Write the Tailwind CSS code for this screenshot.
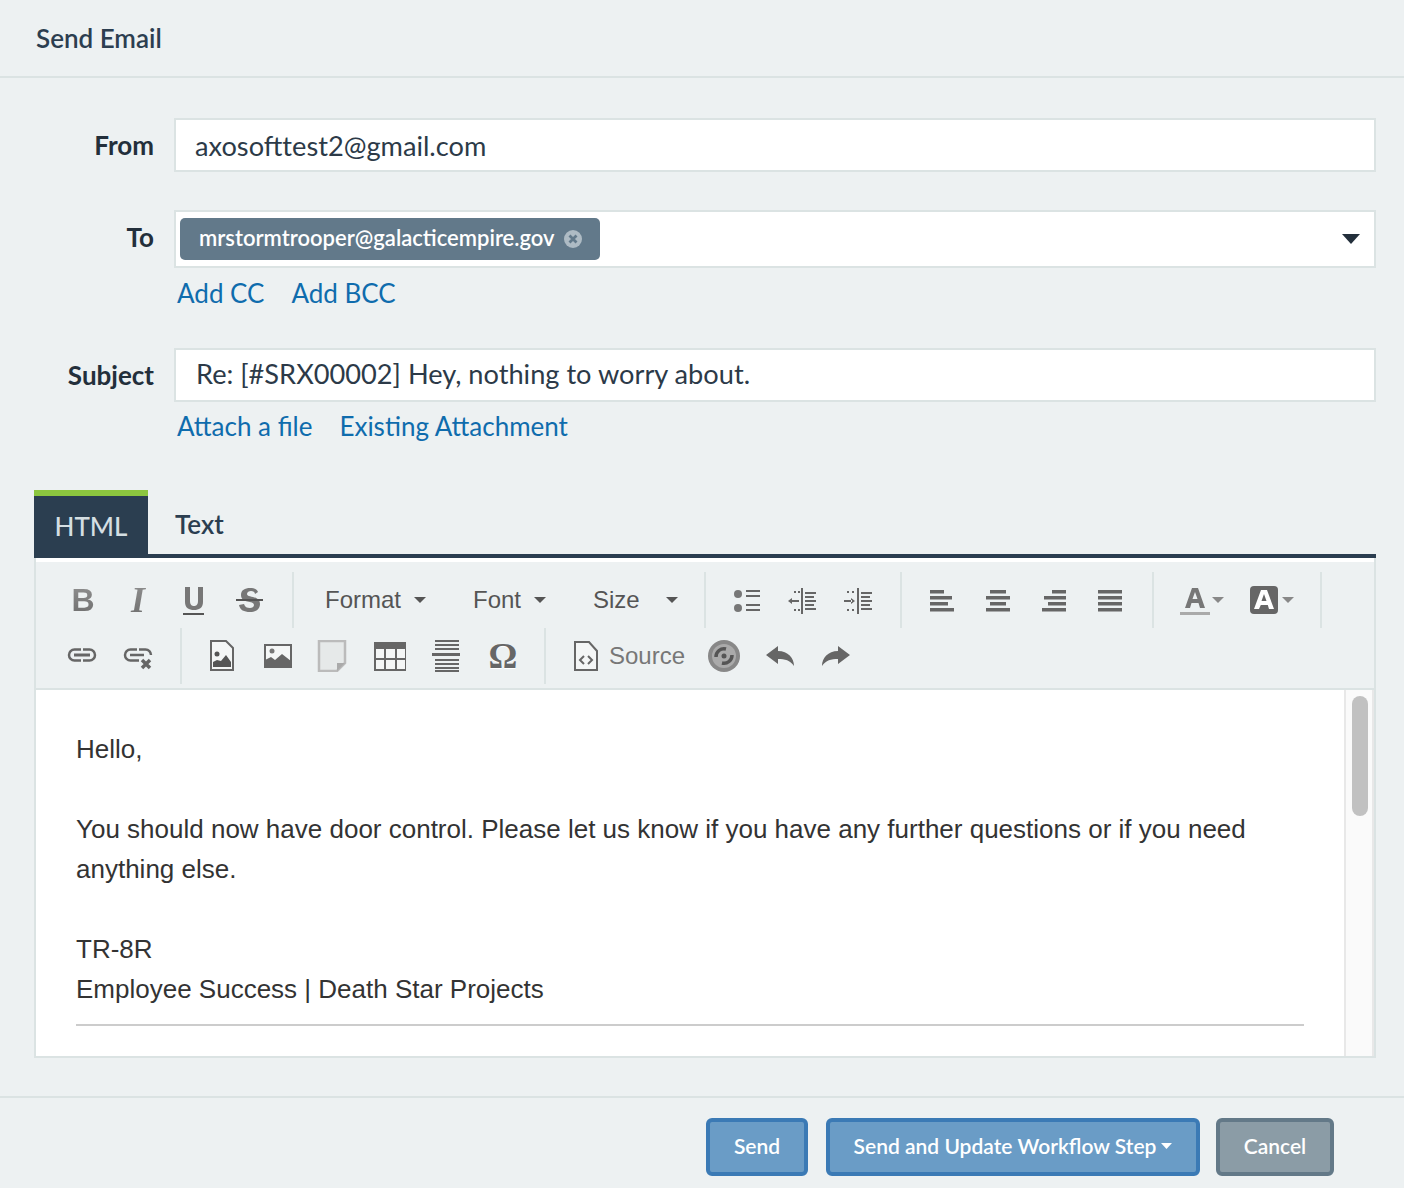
<!DOCTYPE html>
<html><head><meta charset="utf-8"><title>Send Email</title>
<script src="https://cdn.jsdelivr.net/npm/@tailwindcss/browser@4"></script></head>
<body class="m-0 bg-[#edf1f2] font-['Lato',sans-serif] text-[#2c3e50]">
<div class="w-[1404px] h-[1188px] overflow-hidden flex flex-col">
  <header class="h-[78px] shrink-0 border-b-2 border-[#dbe3e3] pl-[36px] flex items-center"><h1 class="text-[26px] font-semibold">Send Email</h1></header>
  <main class="pt-[40px] pl-[34px] pr-[28px] flex-1">
    <div class="flex h-[54px]">
      <label class="w-[120px] text-right text-[26px] font-bold text-[#232f3b] leading-[54px] pb-[2px]">From</label>
      <div class="ml-[20px] flex-1 bg-white border-2 border-[#dbe3e3] pl-[19px] text-[27.2px] leading-[52px] text-[#2c3a48]">axosofttest2@gmail.com</div>
    </div>
    <div class="flex h-[58px] mt-[38px]">
      <label class="w-[120px] text-right text-[26px] font-bold text-[#232f3b] leading-[54px]">To</label>
      <div class="ml-[20px] flex-1 bg-white border-2 border-[#dbe3e3] pl-[4px] flex items-center justify-between pr-[14px]">
        <span class="h-[42px] w-[420px] bg-[#62798a] rounded-[5px] flex items-center pl-[19px] text-white text-[22px] font-medium"><span class="pb-[4px] font-semibold">mrstormtrooper@galacticempire.gov</span>
          <svg class="ml-[8px]" width="20" height="20" viewBox="0 0 20 20"><circle cx="10" cy="10" r="9" fill="#aebbc4"/><path d="M6.5 6.5l7 7M13.500 6.500l-7 7" stroke="#62798a" stroke-width="2.800"/></svg>
        </span>
        <svg width="18" height="10" viewBox="0 0 18 10"><path d="M0 0h18l-9 10z" fill="#232f3b"/></svg>
      </div>
    </div>
    <div class="ml-[143px] h-[50px] flex gap-[27px] text-[26px] leading-[50px] text-[#0f6cad]"><a>Add CC</a><a>Add BCC</a></div>
    <div class="flex h-[54px] mt-[30px]">
      <label class="w-[120px] text-right text-[26px] font-bold text-[#232f3b] leading-[54px]">Subject</label>
      <div class="ml-[20px] flex-1 bg-white border-2 border-[#dbe3e3] pl-[20px] text-[27.2px] leading-[48px] text-[#2c3a48]">Re: [#SRX00002] Hey, nothing to worry about.</div>
    </div>
    <div class="ml-[143px] h-[50px] flex gap-[27px] text-[26px] leading-[48px] text-[#0f6cad]"><a>Attach a file</a><a>Existing Attachment</a></div>
    <div class="mt-[38px] flex h-[68px] border-b-4 border-[#2b3e50] w-[1342px]">
      <div class="w-[114px] h-[66px] border-t-[6px] border-[#8cc63f] bg-[#2b3e50] text-[#d5dee2] text-[26px] font-medium flex items-center justify-center">HTML</div>
      <div class="pl-[27px] text-[26px] font-semibold leading-[68px] text-[#2b3e50]">Text</div>
    </div>
    <div class="w-[1342px] h-[500px] border-x-2 border-b-2 border-[#dbe3e3] flex flex-col">
      <div class="h-[4px] bg-white shrink-0"></div>
      <div class="h-[126px] shrink-0 pt-[10px] text-[#666] text-[24px]">
        <div class="flex h-[56px] pl-[18px] items-center">
          <span class="w-[56px] pl-[2px] text-center font-['Liberation_Sans',sans-serif] font-bold text-[32px] bg-gradient-to-b from-[#999] to-[#666] bg-clip-text text-transparent">B</span>
          <span class="w-[56px] text-center font-['Liberation_Serif',serif] font-bold italic text-[36px] bg-gradient-to-b from-[#999] to-[#666] bg-clip-text text-transparent">I</span>
          <span class="w-[56px] flex justify-center"><svg width="32" height="32" viewBox="0 0 32 32"><path d="M7 3h5v14c0 4 2 5 4 5s4-1 4-5V3h5v15c0 6-4 8-9 8s-9-2-9-8z" fill="#777"/><path d="M5 29h21v2H5z" fill="#555"/></svg></span>
          <span class="w-[56px] flex justify-center"><svg width="32" height="32" viewBox="0 0 32 32"><path d="M24 8c-1-3-4-4-8-4-5 0-9 2-9 7 0 9 13 5 13 10 0 2-2 3-4 3-3 0-5-1-6-4l-5 1c1 5 5 7 11 7s10-3 10-8c0-9-13-6-13-10 0-2 2-3 4-3s4 1 4 3z" fill="#777"/><path d="M2 15h27v2H2z" fill="#555"/></svg></span>
          <i class="ml-[14px] w-[2px] h-[56px] bg-[#dbe3e3]"></i>
          <div class="w-[148px] pl-[31px] pr-[16px] flex items-center justify-between font-['Liberation_Sans',sans-serif] text-[#555]">Format<svg width="12" height="6" viewBox="0 0 12 6"><path d="M0 0h12l-6 6z" fill="#555"/></svg></div>
          <div class="w-[120px] pl-[31px] pr-[16px] flex items-center justify-between font-['Liberation_Sans',sans-serif] text-[#555]">Font<svg width="12" height="6" viewBox="0 0 12 6"><path d="M0 0h12l-6 6z" fill="#555"/></svg></div>
          <div class="w-[142px] pl-[31px] pr-[26px] flex items-center justify-between font-['Liberation_Sans',sans-serif] text-[#555]">Size<svg width="12" height="6" viewBox="0 0 12 6"><path d="M0 0h12l-6 6z" fill="#555"/></svg></div>
          <i class="w-[2px] h-[56px] bg-[#dbe3e3]"></i>
          <div class="ml-[13px] w-[56px] flex justify-center"><svg width="32" height="32" viewBox="0 0 32 32" fill="#666"><circle cx="7" cy="10" r="4" fill="#777"/><circle cx="7" cy="24" r="4" fill="#777"/><path d="M15 6h14v2H15zM15 11h14v2H15zM15 20h14v2H15zM15 25h14v2H15z"/></svg></div>
          <div class="w-[56px] flex justify-center"><svg width="32" height="32" viewBox="0 0 32 32" fill="#666"><path d="M14 4h2v26h-2zM18 8h11v2H18zM18 12h9v2h-9zM18 16h11v2H18zM18 20h9v2h-9zM18 24h11v2H18z"/><path d="M3 16h9v2H3zM1 17l4-3v6zM7 7h2v2H7zM11 7h2v2h-2zM7 25h2v2H7zM11 25h2v2h-2z"/></svg></div>
          <div class="w-[56px] flex justify-center"><svg width="32" height="32" viewBox="0 0 32 32" fill="#666"><path d="M14 4h2v26h-2zM18 8h11v2H18zM18 12h9v2h-9zM18 16h11v2H18zM18 20h9v2h-9zM18 24h11v2H18z"/><path d="M1 16h8v2H1zM12 17l-4-3v6zM4 7h2v2H4zM9 7h2v2H9zM4 25h2v2H4zM9 25h2v2H9z"/></svg></div>
          <i class="ml-[13px] w-[2px] h-[56px] bg-[#dbe3e3]"></i>
          <div class="ml-[12px] w-[56px] flex justify-center"><svg width="32" height="32" viewBox="0 0 32 32" fill="#666"><path d="M4 6h14v3.500H4zM4 12h22v3.500H4zM4 18h18v3.500H4zM4 24h24v3.500H4z"/></svg></div>
          <div class="w-[56px] flex justify-center"><svg width="32" height="32" viewBox="0 0 32 32" fill="#666"><path d="M8 6h16v3.500H8zM4 12h24v3.500H4zM8 18h16v3.500H8zM4 24h24v3.500H4z"/></svg></div>
          <div class="w-[56px] flex justify-center"><svg width="32" height="32" viewBox="0 0 32 32" fill="#666"><path d="M14 6h14v3.500H14zM6 12h22v3.500H6zM10 18h18v3.500H10zM4 24h24v3.500H4z"/></svg></div>
          <div class="w-[56px] flex justify-center"><svg width="32" height="32" viewBox="0 0 32 32" fill="#666"><path d="M4 6h24v3.500H4zM4 12h24v3.500H4zM4 18h24v3.500H4zM4 24h24v3.500H4z"/></svg></div>
          <i class="ml-[14px] w-[2px] h-[56px] bg-[#dbe3e3]"></i>
          <div class="w-[96px] pl-[26px] flex items-center"><svg width="46" height="32" viewBox="0 0 46 32"><path d="M5 24L12 4h6l7 20h-5l-1.500-5h-7L10 24zM12.500 15h5L15 8z" fill="#777"/><path d="M0 28h30v3H0z" fill="#aaa"/><path d="M32 13h12l-6 6z" fill="#888"/></svg></div>
          <div class="w-[70px] flex items-center"><svg width="46" height="32" viewBox="0 0 46 32"><rect x="0" y="2" width="28" height="28" rx="4" fill="#666"/><path d="M4 25L11 6h6l7 19h-5l-1.200-4h-7L9 25zM11.500 17h5L14 10z" fill="#fff"/><path d="M32 13h12l-6 6z" fill="#888"/></svg></div>
          <i class="w-[2px] h-[56px] bg-[#dbe3e3]"></i>
        </div>
        <div class="flex h-[56px] pl-[18px] items-center">
          <div class="w-[56px] flex justify-center"><svg width="32" height="32" viewBox="0 0 32 32" fill="none" stroke="#666" stroke-width="2.500"><path d="M15 9.500H8.500a5.500 5.500 0 0 0 0 11H15M17 9.500h6.500a5.500 5.500 0 0 1 0 11H17"/><path d="M8 15h16" stroke-width="3"/></svg></div>
          <div class="w-[56px] flex justify-center"><svg width="32" height="32" viewBox="0 0 32 32" fill="none" stroke="#666" stroke-width="2.500"><path d="M15 9.500H8.500a5.500 5.500 0 0 0 0 11H17M17 9.500h6.500a5.500 5.500 0 0 1 5.500 5.500M8 15h14"/><path d="M20 20l8 8M28 20l-8 8" stroke-width="3.500"/></svg></div>
          <i class="ml-[14px] w-[2px] h-[56px] bg-[#dbe3e3]"></i>
          <div class="ml-[12px] w-[56px] flex justify-center"><svg width="32" height="32" viewBox="0 0 32 32"><path d="M5 1h15l7 7v22H5z" fill="#f4f6f6" stroke="#666" stroke-width="2"/><circle cx="11" cy="14" r="2.500" fill="#555"/><path d="M7 27v-5l4-2 4 1 5-6 5 7v5z" fill="#555"/></svg></div>
          <div class="w-[56px] flex justify-center"><svg width="32" height="32" viewBox="0 0 32 32"><rect x="3" y="5" width="26" height="22" fill="#f4f6f6" stroke="#666" stroke-width="2"/><circle cx="10" cy="11" r="2.500" fill="#777"/><path d="M3 27v-7l6-3 4 3 7-6 9 7v6z" fill="#666"/></svg></div>
          <div class="w-[56px] flex justify-center"><svg class="-ml-[4px]" width="32" height="32" viewBox="0 0 32 32"><path d="M3 1h26v22l-8 8H3z" fill="#e6e9e9" stroke="#bbb" stroke-width="2.500"/><path d="M21 31v-8h8z" fill="#aaa"/></svg></div>
          <div class="w-[56px] flex justify-center"><svg width="32" height="32" viewBox="0 0 32 32"><path d="M1 3h31v27H1z" fill="#f4f6f6" stroke="#666" stroke-width="2"/><path d="M1 3h31v6H1z" fill="#666"/><path d="M11 9v20M22 9v20M1 19h31" stroke="#666" stroke-width="2"/></svg></div>
          <div class="w-[56px] flex justify-center"><svg width="32" height="32" viewBox="0 0 32 32" fill="#666"><path d="M5 0h24v2H5zM5 4h24v2H5zM5 8h24v2H5zM2 13h28v3H2zM5 19h24v2H5zM5 23h24v2H5zM5 27h24v2H5zM5 30h24v2H5z"/></svg></div>
          <span class="w-[56px] pl-[2px] text-center font-['Liberation_Serif',serif] font-bold text-[36px] leading-[36px] text-[#666] [text-shadow:0_1px_0_#fff]">Ω</span>
          <i class="ml-[14px] w-[2px] h-[56px] bg-[#dbe3e3]"></i>
          <svg class="ml-[28px]" width="24" height="30" viewBox="0 0 24 30"><path d="M1 1h14l8 9v19H1z" fill="#f4f6f6" stroke="#666" stroke-width="2"/><path d="M10 15l-4 4 4 4M14 15l4 4-4 4" fill="none" stroke="#666" stroke-width="2"/></svg>
          <span class="ml-[11px] font-['Liberation_Sans',sans-serif] text-[#777]">Source</span>
          <svg class="ml-[23px]" width="32" height="32" viewBox="0 0 32 32"><circle cx="16" cy="16" r="16" fill="#888"/><circle cx="16" cy="16" r="12" fill="#aaa"/><path d="M8 17a8 8 0 0 1 10-8M24 15a8 8 0 0 1-10 8" fill="none" stroke="#555" stroke-width="3.500"/><circle cx="16" cy="16" r="2.500" fill="#555"/></svg>
          <svg class="ml-[24px]" width="32" height="32" viewBox="0 0 32 32"><path d="M2 15L14 6v5c10 0 16 7 16 15-4-6-9-7-16-7v5z" fill="#666"/></svg>
          <svg class="ml-[24px]" width="32" height="32" viewBox="0 0 32 32"><path d="M30 15L18 6v5C8 11 2 18 2 26c4-6 9-7 16-7v5z" fill="#666"/></svg>
        </div>
      </div>
      <div class="flex-1 min-h-0 bg-white border-t-2 border-[#dbe3e3] flex">
        <div class="flex-1 pl-[40px] pr-[40px] pt-[40px] font-['Liberation_Sans',sans-serif] text-[26px] leading-[40px] text-[#333] overflow-hidden">
          <p class="-mt-[1px]">Hello,</p><p class="mt-[40px]">You should now have door control. Please let us know if you have any further questions or if you need anything else.</p>
          <p class="mt-[40px]">TR-8R</p><p>Employee Success | Death Star Projects</p>
          <hr class="mt-[15px] border-t-2 border-[#ccc]">
        </div>
        <div class="w-[30px] shrink-0 bg-[#fafafa] border-x-2 border-[#e8e8e8] pt-[6px] pl-[6px]"><div class="w-[16px] h-[120px] rounded-full bg-[#c1c1c1]"></div></div>
      </div>
    </div>
  </main>
  <footer class="h-[92px] shrink-0 border-t-2 border-[#dbe3e3] pt-[20px] pr-[70px] flex justify-end gap-[18px] text-white text-[21px] font-semibold">
    <button class="w-[102px] h-[58px] bg-[#6a9cc6] border-4 border-[#3b7ab5] rounded-[6px] pb-[2px]">Send</button>
    <button class="w-[374px] h-[58px] bg-[#6a9cc6] border-4 border-[#3b7ab5] rounded-[6px] pb-[2px] flex items-center justify-center gap-[5px]">Send and Update Workflow Step<svg width="11" height="6" viewBox="0 0 11 6"><path d="M0 0h11L5.500 6z" fill="#fff"/></svg></button>
    <button class="w-[118px] h-[58px] -ml-[2px] bg-[#8b9ca6] border-4 border-[#637988] rounded-[6px] pb-[2px]">Cancel</button>
  </footer>
</div>
</body></html>
